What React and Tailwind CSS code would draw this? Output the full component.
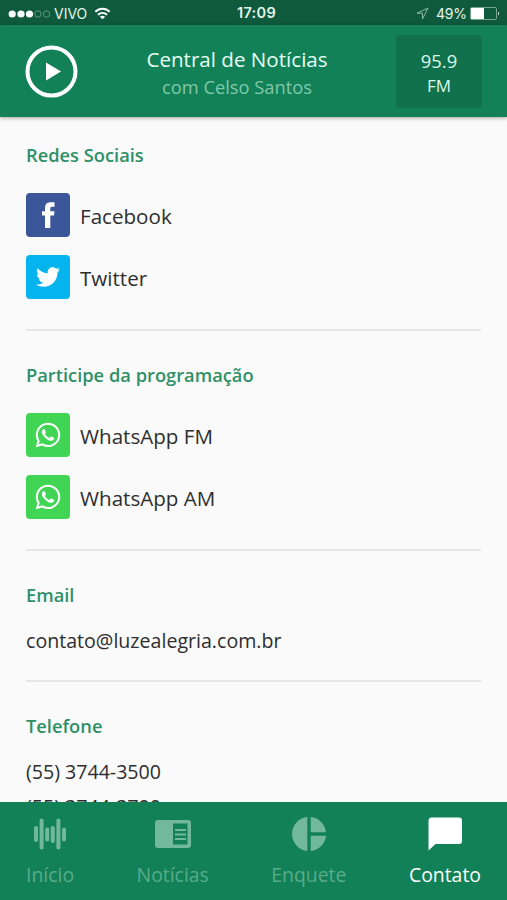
import React from "react";
import { FaWhatsapp, FaTwitter } from "react-icons/fa";

function Section({ title, children, className = "" }) {
  return (
    <section className={"border-b-2 border-[#e6e6e6] " + className}>
      <h2 className="text-[18.3px] leading-6 font-semibold text-[#2f9068] whitespace-nowrap">{title}</h2>
      {children}
    </section>
  );
}

function Row({ color, icon, label }) {
  return (
    <li className="flex h-11 items-center gap-2.5">
      <span className={"flex h-11 w-11 items-center justify-center rounded text-white " + color}>{icon}</span>
      <span className="pt-0.5 text-[20.6px] leading-7 text-[#2e2e2e] whitespace-nowrap">{label}</span>
    </li>
  );
}

function Tab({ label, icon, active }) {
  return (
    <div className={"flex flex-col items-center " + (active ? "text-white" : "text-[#71b89c]")}>
      <div className="flex h-9 items-center justify-center">{icon}</div>
      <span className={"mt-[11px] text-[19.4px] leading-6 whitespace-nowrap " + (active ? "" : "text-[#5aab8a]")}>{label}</span>
    </div>
  );
}

const facebookIcon = (
  <svg width="13" height="26" viewBox="0 0 13 26" fill="currentColor">
    <path d="M3 26V13.500H0V9.200h3V6.400C3 2.300 4.900.300 8.800.300H12.500v4.400h-2.300c-1.600 0-1.900.700-1.900 1.900v2.600h4.200l-.500 4.300H8.300V26z" />
  </svg>
);
const barsIcon = (
  <svg width="34" height="34" viewBox="0 0 34 34" stroke="currentColor" strokeWidth="4" strokeLinecap="round">
    <path d="M3 11v12M8.600 3.500v27M14.200 12.500v10M19.800 11v13M25.400 3.500v27M31 12.500v10" />
  </svg>
);
const newsIcon = (
  <svg width="36" height="28" viewBox="0 0 36 28">
    <path fill="currentColor" fillRule="evenodd" d="M3 0h30a3 3 0 0 1 3 3v22a3 3 0 0 1-3 3H3a3 3 0 0 1-3-3V3a3 3 0 0 1 3-3zM18 3.500v21h14.500v-21z" />
    <path stroke="currentColor" strokeWidth="2" d="M20 10h11M20 14.500h11M20 19h11" />
  </svg>
);
const pieIcon = (
  <svg width="34" height="34" viewBox="0 0 34 34" fill="currentColor">
    <path d="M15.300 0v34C6.800 33.200 0 26 0 17S6.800.800 15.300 0zM18.700 0v15.300H34C33.200 7.200 26.800.800 18.700 0zM18.700 18.700V34C26.800 33.200 33.200 26.800 34 18.700z" />
  </svg>
);
const chatIcon = (
  <svg width="34" height="34" viewBox="0 0 34 34" fill="currentColor">
    <path d="M3 .500h28a3 3 0 0 1 3 3V24a3 3 0 0 1-3 3H7.500L.500 33.500V3.500a3 3 0 0 1 2.500-3z" />
  </svg>
);

export default function App() {
  return (
    <div className="flex h-[900px] w-[507px] flex-col overflow-hidden bg-[#fafafa] font-['Open_Sans',sans-serif]">
      <div className="grid h-[25px] shrink-0 grid-cols-3 items-center bg-[#0f5a3d] pl-2 pr-1.5 pt-0.5 font-['Inter',sans-serif] text-[14px] leading-none text-[#e4f5ed]">
        <div className="flex items-center">
          <svg width="43" height="10" viewBox="0 0 43 10">
            <g fill="#fff">
              <circle cx="4.200" cy="5" r="3.600" />
              <circle cx="13" cy="5" r="3.600" />
              <circle cx="21.500" cy="5" r="3.600" />
            </g>
            <g fill="none" stroke="#61967f">
              <circle cx="30" cy="5" r="3.200" />
              <circle cx="38.500" cy="5" r="3.200" />
            </g>
          </svg>
          <span className="ml-[3px] w-[34px] whitespace-nowrap">VIVO</span>
          <svg className="ml-[6px]" width="17" height="13" viewBox="0 0 17 13" fill="none" stroke="#fff" strokeWidth="2">
            <path d="M1.300 4.800C5.500.600 11.500.600 15.700 4.800M4 7.800c2.600-2.500 6.400-2.500 9 0" />
            <path d="M5.900 9.700c1.500-1.400 3.700-1.400 5.200 0L8.500 12.300z" fill="#fff" stroke="none" />
          </svg>
        </div>
        <div className="pl-1 text-center text-[14.500px] font-semibold tracking-[0.3px]">17:09</div>
        <div className="flex items-center justify-end whitespace-nowrap">
          <svg className="mr-[7px]" width="13" height="13" viewBox="0 0 13 13" fill="none" stroke="#8dbaa5" strokeWidth="1">
            <path d="M12 1L1 6.200h5.500V12z" />
          </svg>
          <span className="w-[31px] tracking-[-0.2px]">49%</span>
          <svg className="ml-[3px]" width="31" height="13" viewBox="0 0 31 13">
            <rect x=".5" y=".5" width="26" height="12" rx="1.500" fill="none" stroke="#75a58e" />
            <rect x="1" y="1" width="13" height="11" fill="#fff" />
            <path d="M28 4.500a2.500 2.500 0 0 1 0 4z" fill="#d4ebe0" />
          </svg>
        </div>
      </div>

      <header className="z-10 flex h-[92px] shrink-0 items-center justify-between bg-[#128158] pl-[25px] pr-[25px] shadow-[0_1px_4px_rgba(0,0,0,0.35)]">
        <svg width="53" height="53" viewBox="0 0 53 53">
          <circle cx="26.500" cy="26.500" r="24" fill="none" stroke="#fff" strokeWidth="4" />
          <path d="M21 17.500v18l15-9z" fill="#fff" />
        </svg>
        <div className="pt-[3px] text-center whitespace-nowrap">
          <div className="text-[20.6px] leading-7 text-[#e6fff4]">Central de Notícias</div>
          <div className="text-[18.3px] leading-7 text-[#81c8aa]">com Celso Santos</div>
        </div>
        <div className="flex h-[73px] w-[86px] flex-col items-center justify-center rounded bg-[#11714c] pt-1 text-[18.4px] leading-[25px] text-[#d9f8eb]">
          <span>95.9</span>
          <span className="text-[17px]">FM</span>
        </div>
      </header>

      <main className="min-h-0 flex-1 overflow-hidden px-[26px]">
        <Section title="Redes Sociais" className="h-[214px] pt-[26px]">
          <ul className="mt-[26px] flex flex-col gap-[18px]">
            <Row color="bg-[#3c5799]" icon={facebookIcon} label="Facebook" />
            <Row color="bg-[#05b3ee]" icon={<FaTwitter size={24} />} label="Twitter" />
          </ul>
        </Section>
        <Section title="Participe da programação" className="h-[220px] pt-8">
          <ul className="mt-[26px] flex flex-col gap-[18px]">
            <Row color="bg-[#40d554]" icon={<FaWhatsapp size={28} />} label="WhatsApp FM" />
            <Row color="bg-[#40d554]" icon={<FaWhatsapp size={28} />} label="WhatsApp AM" />
          </ul>
        </Section>
        <Section title="Email" className="h-[131px] pt-8">
          <p className="mt-5 text-[19.6px] leading-7 text-[#2e2e2e]">contato@luzealegria.com.br</p>
        </Section>
        <Section title="Telefone" className="pt-8">
          <p className="mt-[18px] text-[19.6px] leading-8 text-[#2e2e2e]">(55) 3744-3500</p>
          <p className="mt-[3px] text-[19.6px] leading-8 text-[#2e2e2e]">(55) 3744-3700</p>
        </Section>
      </main>

      <nav className="flex h-[98px] shrink-0 justify-between bg-[#128158] px-[26px] pt-[14px]">
        <Tab label="Início" icon={barsIcon} />
        <Tab label="Notícias" icon={newsIcon} />
        <Tab label="Enquete" icon={pieIcon} />
        <Tab label="Contato" icon={chatIcon} active />
      </nav>
    </div>
  );
}
